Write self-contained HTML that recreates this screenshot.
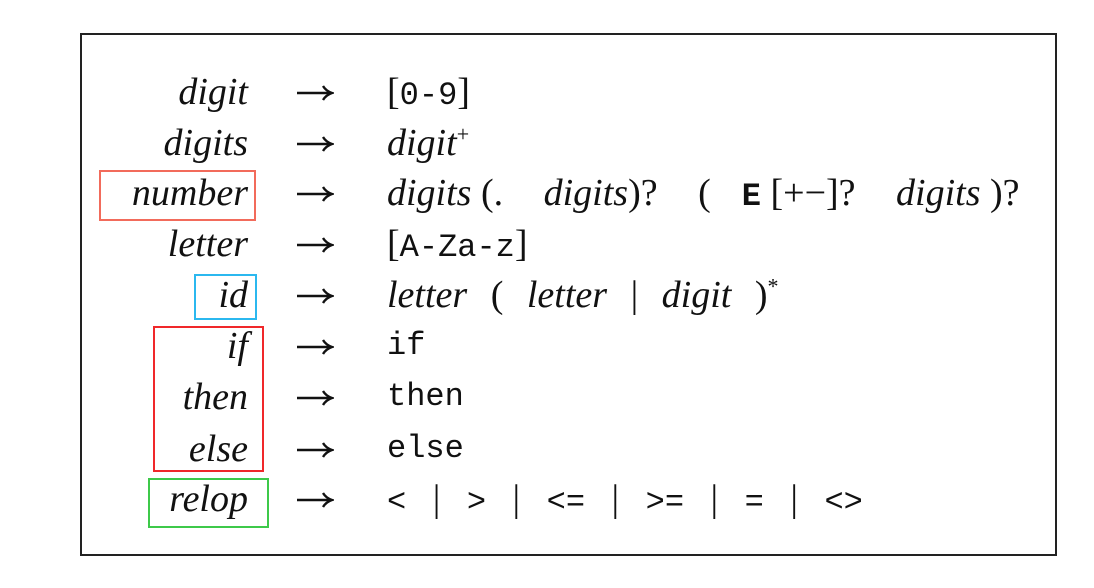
<!DOCTYPE html>
<html><head><meta charset="utf-8"><style>
body{margin:0;width:1094px;height:588px;background:#fff;position:relative;overflow:hidden;font-family:"Liberation Serif",serif;color:#111}
.frame{position:absolute;left:80px;top:33px;width:977px;height:523px;border:2px solid #222;box-sizing:border-box}
.row{position:absolute;left:0;width:1094px;height:50px;line-height:50px;font-size:38px}
.l{position:absolute;right:846px;font-style:italic;white-space:nowrap}
.a{position:absolute;left:296px;top:18px;width:38px;height:16px}
.r{position:absolute;left:387px;white-space:nowrap}
i{font-style:italic}
.m{font-family:"Liberation Mono",monospace;font-size:32px}
.s{display:inline-block;width:31px}
.box{position:absolute;border:2px solid;box-sizing:border-box}
</style></head><body>
<svg width="0" height="0" style="position:absolute"><symbol id="ar" viewBox="0 0 38 16"><path d="M1 8H36M27 1Q30 6 36 8Q30 10 27 15" fill="none" stroke="#111" stroke-width="2.4"/></symbol></svg>
<div class="frame"></div>
<div class="row" style="top:67px"><span class="l">digit</span><svg class="a"><use href="#ar"/></svg><span class="r">[<span class="m">0-9</span>]</span></div>
<div class="row" style="top:118px"><span class="l">digits</span><svg class="a"><use href="#ar"/></svg><span class="r"><i>digit</i><sup style="font-size:22px;line-height:0">+</sup></span></div>
<div class="row" style="top:168px"><span class="l">number</span><svg class="a"><use href="#ar"/></svg><span class="r"><i>digits</i> (.<span class="s"></span> <i>digits</i>)?<span class="s"></span> (<span class="s"></span><b class="m">E</b> [+−]?<span class="s"></span> <i>digits</i> )?</span></div>
<div class="row" style="top:219px"><span class="l">letter</span><svg class="a"><use href="#ar"/></svg><span class="r">[<span class="m">A-Za-z</span>]</span></div>
<div class="row" style="top:270px"><span class="l">id</span><svg class="a"><use href="#ar"/></svg><span class="r" style="word-spacing:14px"><i>letter</i> ( <i>letter</i> | <i>digit</i> )<sup style="font-size:22px;line-height:0">*</sup></span></div>
<div class="row" style="top:321px"><span class="l">if</span><svg class="a"><use href="#ar"/></svg><span class="r m">if</span></div>
<div class="row" style="top:372px"><span class="l">then</span><svg class="a"><use href="#ar"/></svg><span class="r m">then</span></div>
<div class="row" style="top:424px"><span class="l">else</span><svg class="a"><use href="#ar"/></svg><span class="r m">else</span></div>
<div class="row" style="top:474px"><span class="l">relop</span><svg class="a"><use href="#ar"/></svg><span class="r" style="word-spacing:17px"><span class="m">&lt;</span> | <span class="m">&gt;</span> | <span class="m">&lt;=</span> | <span class="m">&gt;=</span> | <span class="m">=</span> | <span class="m">&lt;&gt;</span></span></div>
<div class="box" style="left:99px;top:170px;width:157px;height:51px;border-color:#f26b5b"></div>
<div class="box" style="left:194px;top:274px;width:63px;height:46px;border-color:#2bb8ef"></div>
<div class="box" style="left:153px;top:326px;width:111px;height:146px;border-color:#f0282a"></div>
<div class="box" style="left:148px;top:478px;width:121px;height:50px;border-color:#3dc94a"></div>
</body></html>
